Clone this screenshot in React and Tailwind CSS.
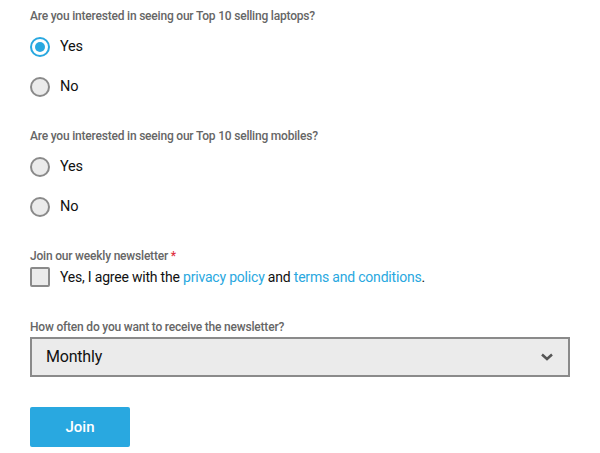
import { useState } from "react";

function Radio({ checked, label, onChange }) {
  return (
    <label className="flex items-center h-5 cursor-pointer" onClick={onChange}>
      <span
        className={
          "w-5 h-5 rounded-full border-2 flex items-center justify-center shrink-0 " +
          (checked ? "border-[#29a8e0] bg-white" : "border-[#8a8a8a] bg-[#ebebeb]")
        }
      >
        {checked && <span className="w-[10px] h-[10px] rounded-full bg-[#29a8e0]" />}
      </span>
      <span className="ml-[10px] text-[14.5px] tracking-[-0.2px] text-[#111]">{label}</span>
    </label>
  );
}

function Question({ text, value, setValue }) {
  return (
    <div>
      <div className="text-[12px] font-medium text-[#666] leading-4 tracking-[-0.2px]">{text}</div>
      <div className="mt-[13px] flex flex-col gap-5">
        <Radio checked={value === "yes"} label="Yes" onChange={() => setValue("yes")} />
        <Radio checked={value === "no"} label="No" onChange={() => setValue("no")} />
      </div>
    </div>
  );
}

export default function App() {
  const [laptops, setLaptops] = useState("yes");
  const [mobiles, setMobiles] = useState(null);

  return (
    <div className="bg-white w-[600px] h-[453px] px-[30px] pt-2" style={{ fontFamily: "Roboto, sans-serif" }}>
      <Question
        text="Are you interested in seeing our Top 10 selling laptops?"
        value={laptops}
        setValue={setLaptops}
      />
      <div className="mt-[31px]">
        <Question
          text="Are you interested in seeing our Top 10 selling mobiles?"
          value={mobiles}
          setValue={setMobiles}
        />
      </div>

      <div className="mt-[31px]">
        <div className="text-[12px] font-medium text-[#666] leading-4 tracking-[-0.2px]">
          Join our weekly newsletter <span className="text-[#e0303f]">*</span>
        </div>
        <label className="mt-[3px] flex items-center h-5">
          <span className="w-5 h-5 rounded-[2px] border-2 border-[#8a8a8a] bg-[#ebebeb] shrink-0" />
          <span className="ml-[10px] text-[14px] tracking-[-0.2px] text-[#111]">
            Yes, I agree with the <a className="text-[#29a8e0]">privacy policy</a> and{" "}
            <a className="text-[#29a8e0]">terms and conditions</a>.
          </span>
        </label>
      </div>

      <div className="mt-8">
        <div className="text-[12px] font-medium text-[#666] leading-4 tracking-[-0.2px]">
          How often do you want to receive the newsletter?
        </div>
        <div className="mt-[2px] h-10 border-2 border-[#8a8a8a] bg-[#ebebeb] flex items-center justify-between px-[14px]">
          <span className="text-[16px] tracking-[-0.2px] text-[#111]">Monthly</span>
          <svg width="14" height="10" viewBox="0 0 14 10">
            <path d="M2 2.5 L7 7 L12 2.5" fill="none" stroke="#555" strokeWidth="2.5" />
          </svg>
        </div>
      </div>

      <button className="mt-[30px] w-[100px] h-10 bg-[#29a8e0] text-white text-[15px] font-medium rounded-[2px]">
        Join
      </button>
    </div>
  );
}
